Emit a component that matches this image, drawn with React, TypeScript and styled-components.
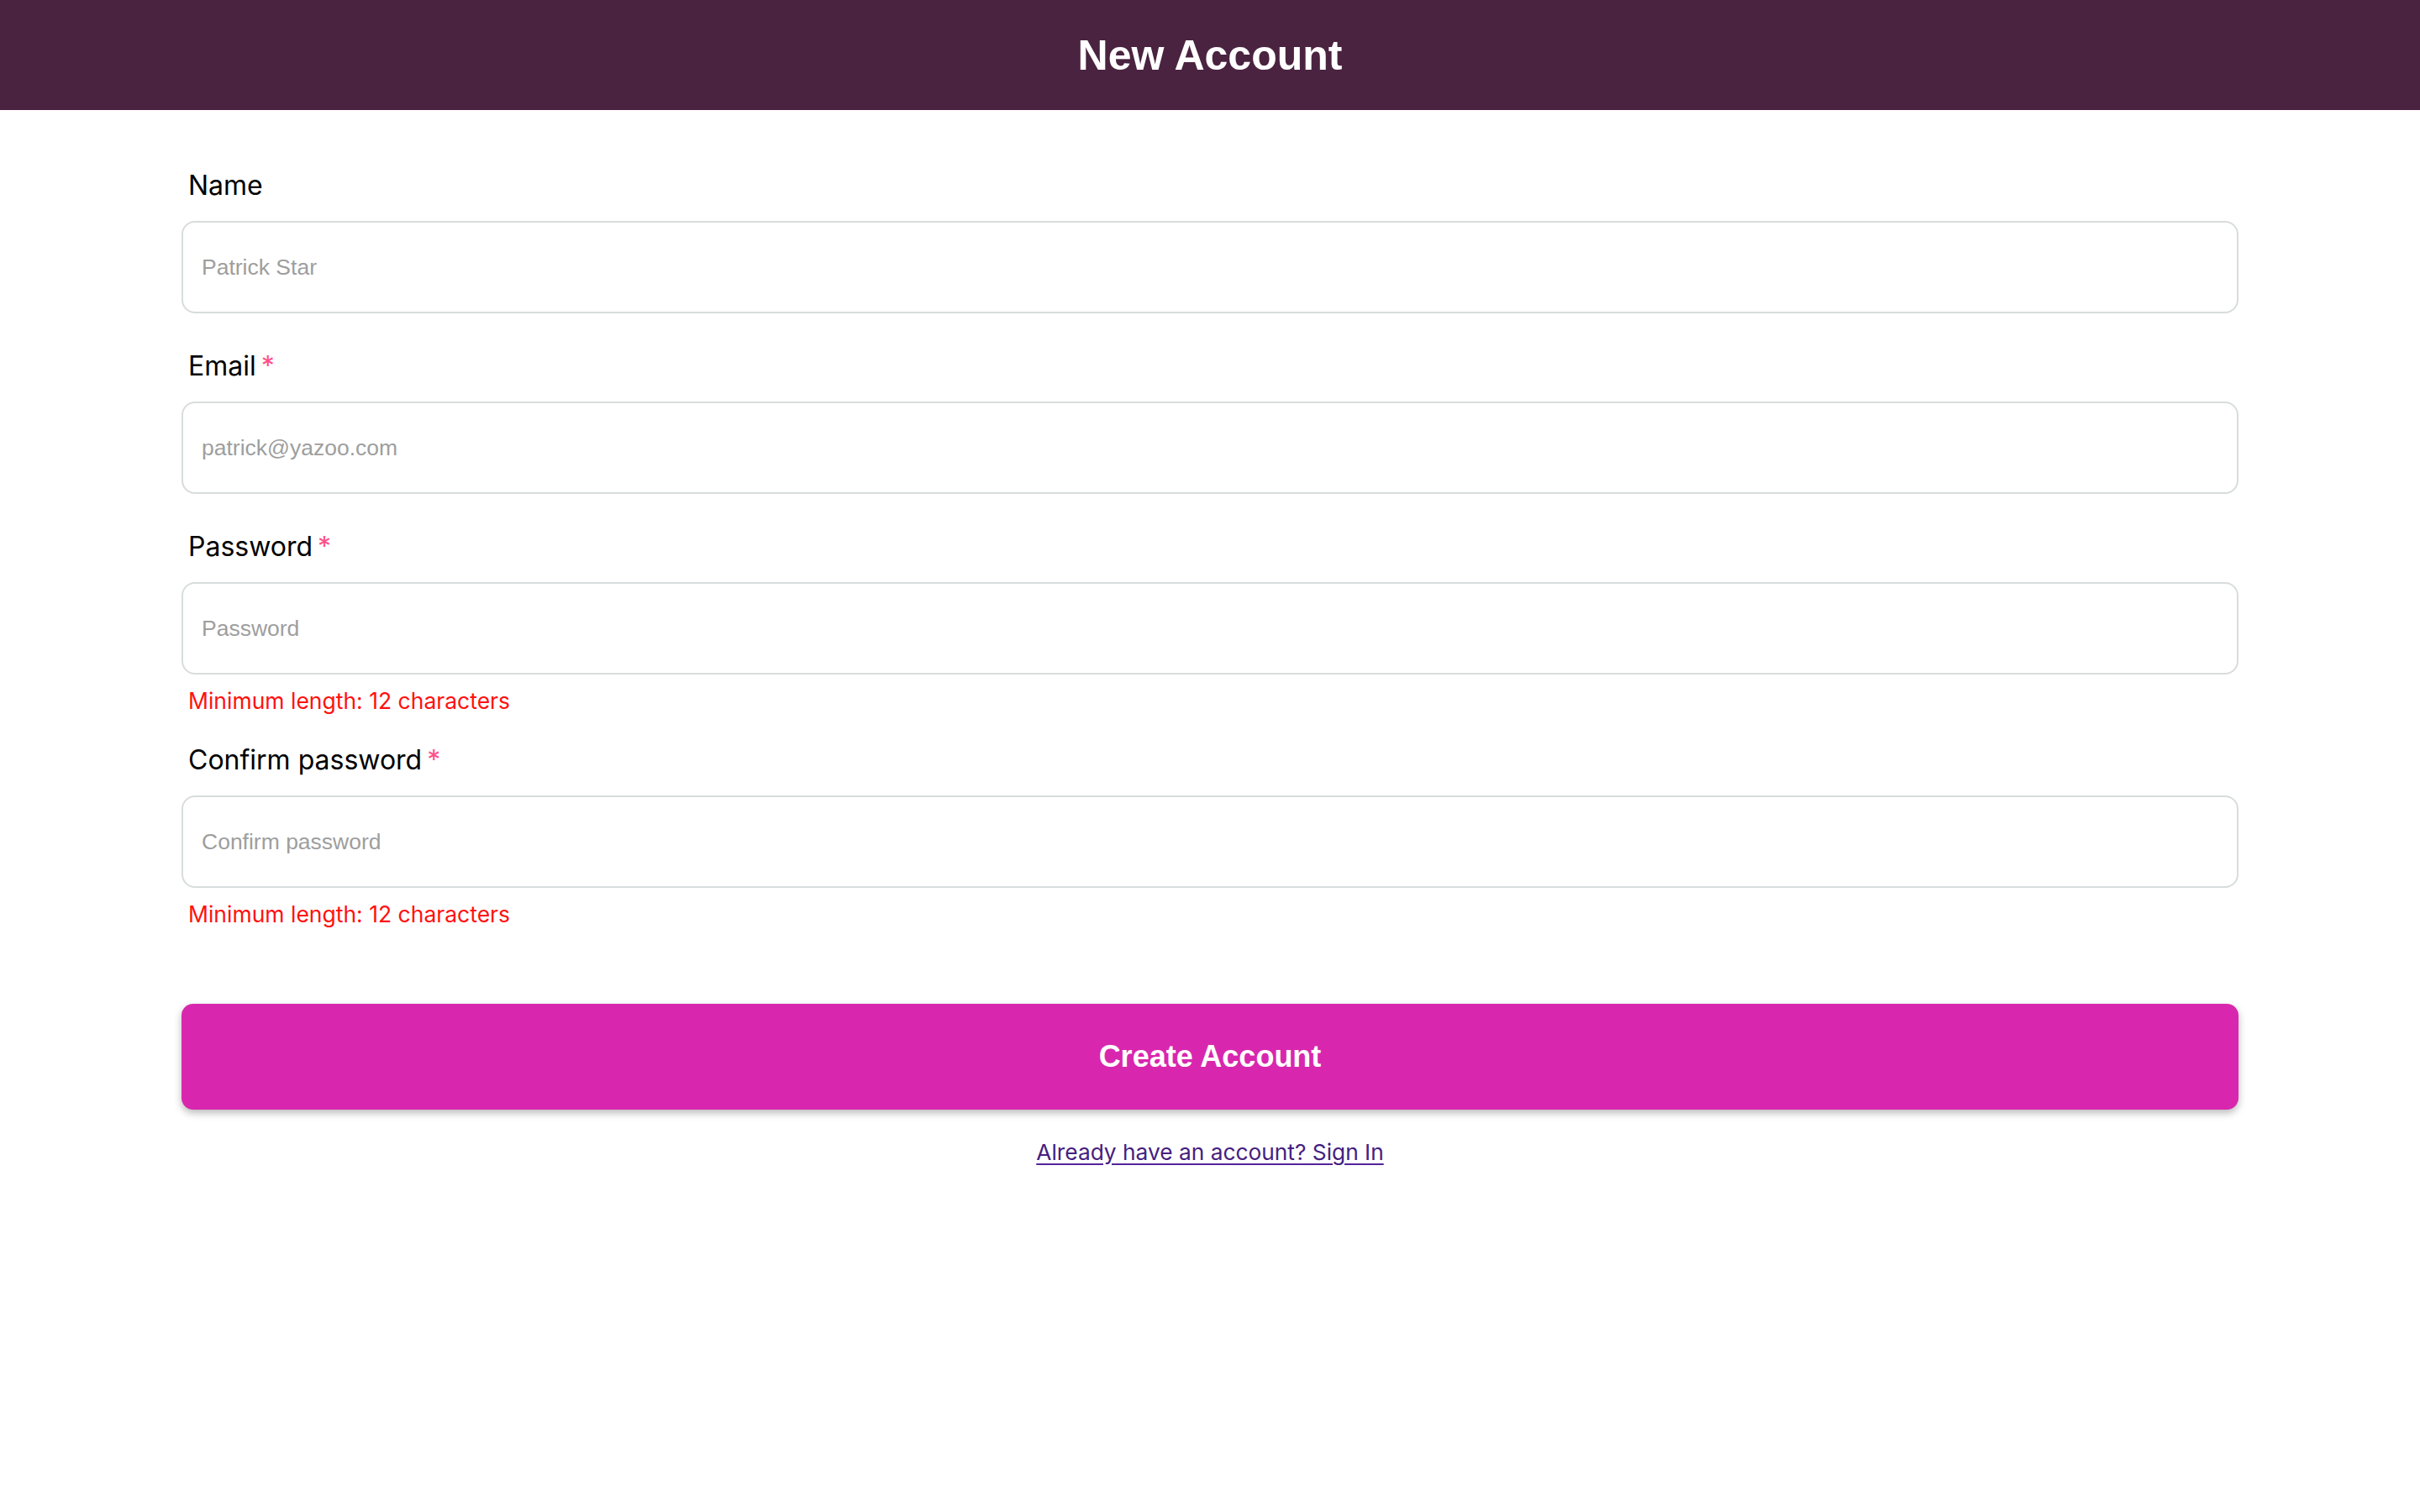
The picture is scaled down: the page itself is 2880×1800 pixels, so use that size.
import React from "react";
import styled, { createGlobalStyle } from "styled-components";

const GlobalStyle = createGlobalStyle`
  html, body {
    margin: 0;
    padding: 0;
    background: #ffffff;
  }
  * { box-sizing: border-box; }
`;

const Page = styled.div`
  min-height: 100vh;
  background: #ffffff;
  display: flex;
  flex-direction: column;
`;

const Header = styled.header`
  height: 131px;
  background: #4a2340;
  display: flex;
  align-items: center;
  justify-content: center;
`;

const Title = styled.h1`
  margin: 0;
  font-family: "Liberation Sans", Arial, sans-serif;
  font-weight: 700;
  font-size: 50px;
  color: #ffffff;
`;

const Form = styled.form`
  width: 85%;
  margin: 0 auto;
  padding-top: 70px;
  display: flex;
  flex-direction: column;
`;

const Field = styled.div<{ $hasError?: boolean }>`
  display: flex;
  flex-direction: column;
  padding-bottom: ${(p) => (p.$hasError ? "36px" : "43px")};
`;

const Label = styled.label`
  font-family: Inter, "Noto Sans", sans-serif;
  font-size: 32px;
  line-height: 40px;
  color: #000000;
  padding-left: 8px;
  margin-bottom: 22px;
`;

const Required = styled.span`
  color: #ff4f8a;
  margin-left: 6px;
`;

const Input = styled.input`
  height: 110px;
  width: 100%;
  border: 2px solid #d8dcdc;
  border-radius: 16px;
  padding: 0 22px;
  font-family: "Liberation Sans", Arial, sans-serif;
  font-size: 26.5px;
  color: #222;
  background: #ffffff;
  outline: none;

  &::placeholder {
    color: #9e9e9e;
  }
`;

const ErrorText = styled.div`
  font-family: Inter, "Noto Sans", sans-serif;
  font-size: 26.5px;
  line-height: 30px;
  color: #ff1010;
  padding-left: 8px;
  margin-top: 16px;
`;

const Actions = styled.div`
  margin-top: 56px;
  display: flex;
  flex-direction: column;
  align-items: center;
`;

const SubmitButton = styled.button`
  width: 100%;
  height: 126px;
  border: none;
  border-radius: 14px;
  background: #d827ae;
  color: #ffffff;
  font-family: "Liberation Sans", Arial, sans-serif;
  font-weight: 700;
  font-size: 36px;
  box-shadow: 0 4px 10px rgba(0, 0, 0, 0.28);
  cursor: pointer;
`;

const SignInLink = styled.a`
  margin-top: 36px;
  font-family: Inter, "Noto Sans", sans-serif;
  font-size: 26.3px;
  line-height: 30px;
  color: #45207f;
  text-decoration: underline;
  text-decoration-color: #55249a;
  text-underline-offset: 4px;
  cursor: pointer;
`;

type FieldDef = {
  label: string;
  placeholder: string;
  type: string;
  required?: boolean;
  error?: string;
};

const fields: FieldDef[] = [
  { label: "Name", placeholder: "Patrick Star", type: "text" },
  { label: "Email", placeholder: "patrick@yazoo.com", type: "email", required: true },
  {
    label: "Password",
    placeholder: "Password",
    type: "password",
    required: true,
    error: "Minimum length: 12 characters",
  },
  {
    label: "Confirm password",
    placeholder: "Confirm password",
    type: "password",
    required: true,
    error: "Minimum length: 12 characters",
  },
];

export default function App() {
  return (
    <Page>
      <GlobalStyle />
      <Header>
        <Title>New Account</Title>
      </Header>
      <Form onSubmit={(e) => e.preventDefault()}>
        {fields.map((f) => (
          <Field key={f.label} $hasError={!!f.error}>
            <Label>
              {f.label}
              {f.required && <Required>*</Required>}
            </Label>
            <Input type={f.type} placeholder={f.placeholder} />
            {f.error && <ErrorText>{f.error}</ErrorText>}
          </Field>
        ))}
        <Actions>
          <SubmitButton type="submit">Create Account</SubmitButton>
          <SignInLink href="#">Already have an account? Sign In</SignInLink>
        </Actions>
      </Form>
    </Page>
  );
}
